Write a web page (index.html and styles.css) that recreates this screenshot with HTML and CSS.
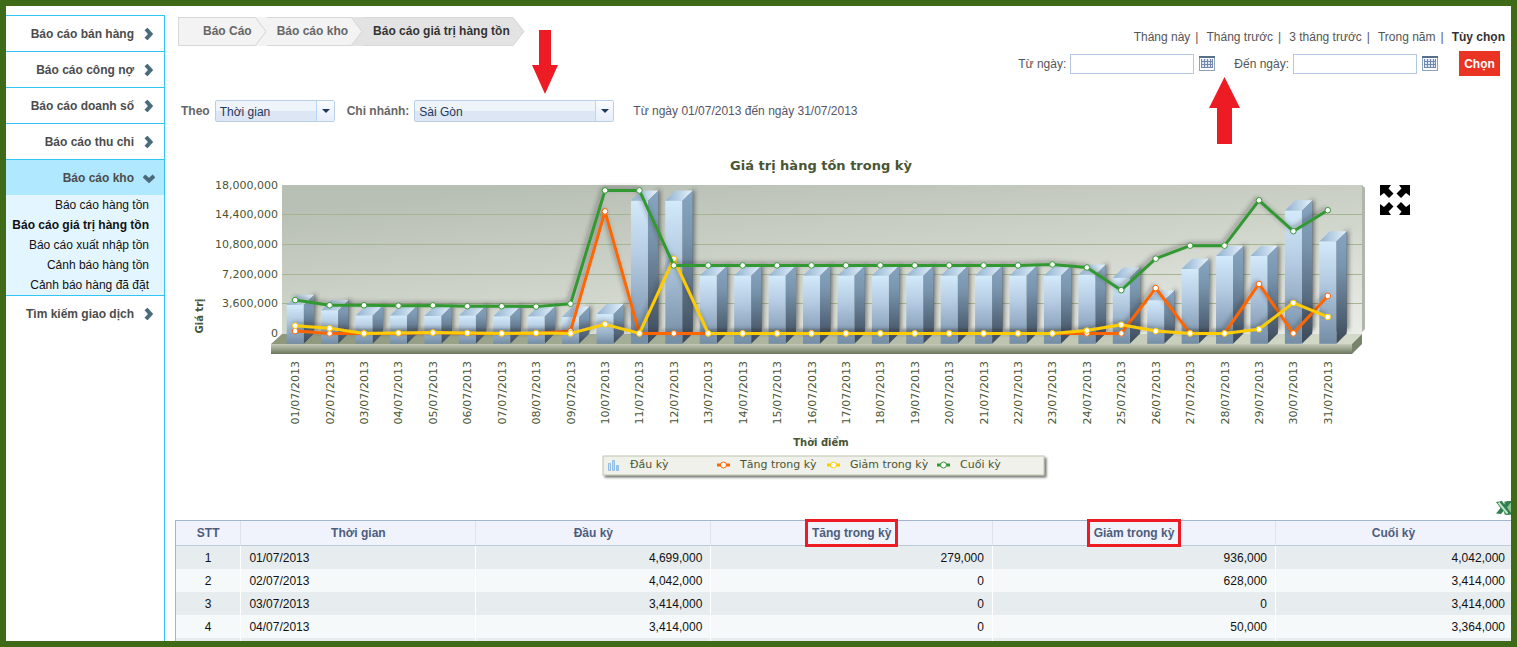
FILE: index.html
```html
<!DOCTYPE html>
<html lang="vi">

<head>
  <meta charset="UTF-8">
  <meta name="viewport" content="width=device-width, initial-scale=1.0">
  <title>Báo cáo giá trị hàng tồn</title>
  <link rel="stylesheet" href="styles.css">
</head>

<body>
  <div class="app">
    <nav class="sidebar">
      <ul class="menu">
        <li><a href="#">Báo cáo bán hàng <svg class="chevron" viewBox="0 0 12 12"><path d="M3 1 L7.500 6 L3 11" /></svg></a></li>
        <li><a href="#">Báo cáo công nợ <svg class="chevron" viewBox="0 0 12 12"><path d="M3 1 L7.500 6 L3 11" /></svg></a></li>
        <li><a href="#">Báo cáo doanh số <svg class="chevron" viewBox="0 0 12 12"><path d="M3 1 L7.500 6 L3 11" /></svg></a></li>
        <li><a href="#">Báo cáo thu chi <svg class="chevron" viewBox="0 0 12 12"><path d="M3 1 L7.500 6 L3 11" /></svg></a></li>
        <li class="open">
          <a href="#">Báo cáo kho <svg class="chevron" viewBox="0 0 12 12"><path d="M1 4 L6 8.500 L11 4" /></svg></a>
          <ul class="submenu">
            <li><a href="#">Báo cáo hàng tồn</a></li>
            <li><a href="#" class="current">Báo cáo giá trị hàng tồn</a></li>
            <li><a href="#">Báo cáo xuất nhập tồn</a></li>
            <li><a href="#">Cảnh báo hàng tồn</a></li>
            <li><a href="#">Cảnh báo hàng đã đặt</a></li>
          </ul>
        </li>
        <li><a href="#">Tìm kiếm giao dịch <svg class="chevron" viewBox="0 0 12 12"><path d="M3 1 L7.500 6 L3 11" /></svg></a></li>
      </ul>
    </nav>

    <main class="main">
      <header class="header">
        <ol class="breadcrumb">
          <li>
            <a href="#">Báo Cáo</a>
            <svg viewBox="0 0 12 29"><path class="light" d="M0 0 H12 V29 H0 Z" /><path class="edge" d="M0 0 L11 14.500 L0 29" /></svg>
          </li>
          <li>
            <a href="#">Báo cáo kho</a>
            <svg viewBox="0 0 12 29"><path class="dark" d="M0 0 H12 V29 H0 Z" /><path class="light edge" d="M0 0 L11 14.500 L0 29" /></svg>
          </li>
          <li class="active">
            <a href="#">Báo cáo giá trị hàng tồn</a>
            <svg viewBox="0 0 12 29"><path class="dark edge" d="M0 0.500 L11 14.500 L0 28.500" /></svg>
          </li>
        </ol>

        <form class="period">
          <div class="shortcuts">
            <a href="#">Tháng này</a>|<a href="#">Tháng trước</a>|<a href="#">3 tháng trước</a>|<a href="#">Trong năm</a>|<a href="#" class="selected">Tùy chọn</a>
          </div>
          <div class="dates">
            <label for="fromDate">Từ ngày:</label>
            <input type="text" id="fromDate">
            <button type="button" class="calendar" aria-label="Chọn từ ngày">
              <svg viewBox="0 0 16 15"><use href="#calendarIcon" /></svg>
            </button>
            <label for="toDate">Đến ngày:</label>
            <input type="text" id="toDate">
            <button type="button" class="calendar" aria-label="Chọn đến ngày">
              <svg viewBox="0 0 16 15"><use href="#calendarIcon" /></svg>
            </button>
            <button type="button" class="submit">Chọn</button>
          </div>
        </form>
      </header>

      <div class="filters">
        <label for="groupBy">Theo</label>
        <span class="select group-by">
          <select id="groupBy">
            <option>Thời gian</option>
          </select>
        </span>
        <label for="branch">Chi nhánh:</label>
        <span class="select branch">
          <select id="branch">
            <option>Sài Gòn</option>
          </select>
        </span>
        <span class="range">Từ ngày 01/07/2013 đến ngày 31/07/2013</span>
      </div>

      <section class="chart">
        <svg id="stockChart" viewBox="0 0 1200 350" role="img" aria-label="Giá trị hàng tồn trong kỳ">
          <defs>
            <linearGradient id="wall" gradientUnits="userSpaceOnUse" x1="107" y1="45" x2="130" y2="293">
              <stop offset="0.100" stop-color="#b8bfb4" />
              <stop offset="1" stop-color="#eaede6" />
            </linearGradient>
            <linearGradient id="floor" x1="0" x2="1">
              <stop offset="0" stop-color="#8c977c" />
              <stop offset="1" stop-color="#d4dac9" />
            </linearGradient>
            <linearGradient id="base" x1="0" y1="0" x2="0" y2="1">
              <stop offset="0" stop-color="#c5ccba" />
              <stop offset="1" stop-color="#6b765e" />
            </linearGradient>
            <linearGradient id="barFront" x1="0" y1="0" x2="0" y2="1">
              <stop offset="0" stop-color="#d3eafb" />
              <stop offset="0.400" stop-color="#b3cae1" />
              <stop offset="1" stop-color="#738da5" />
            </linearGradient>
            <linearGradient id="barSide" x1="0" y1="0" x2="0" y2="1">
              <stop offset="0" stop-color="#86a5c1" />
              <stop offset="0.300" stop-color="#7a96af" />
              <stop offset="1" stop-color="#3c4959" />
            </linearGradient>
            <linearGradient id="barTop" x1="0" x2="1">
              <stop offset="0" stop-color="#8fb1d0" />
              <stop offset="1" stop-color="#e6f3fd" />
            </linearGradient>
            <linearGradient id="legendBar" x1="0" x2="1">
              <stop offset="0" stop-color="#cbe6fb" />
              <stop offset="1" stop-color="#9cc8ee" />
            </linearGradient>
            <filter id="shadow" x="-40%" y="-20%" width="200%" height="140%">
              <feDropShadow dx="2" dy="-2" stdDeviation="2" flood-color="#333" flood-opacity="0.600" />
            </filter>
            <filter id="lineShadow" filterUnits="userSpaceOnUse" x="0" y="0" width="1200" height="350">
              <feDropShadow dx="-2" dy="-2" stdDeviation="2" flood-color="#333" flood-opacity="0.450" />
            </filter>
            <filter id="legendShadow" x="-5%" y="-20%" width="110%" height="160%">
              <feDropShadow dx="2" dy="2" stdDeviation="1" flood-color="#333" flood-opacity="0.700" />
            </filter>
          </defs>

          <text class="chart-title" x="646" y="30">Giá trị hàng tồn trong kỳ</text>
          <text class="axis-title" transform="translate(28 176) rotate(-90)">Giá trị</text>
          <text class="axis-title" x="646" y="306">Thời điểm</text>

          <path d="M1187 45 L1190 48 V189 L1187 192 Z" fill="#b0b7aa" />
          <rect x="107" y="45" width="1080" height="149" fill="url(#wall)" />
          <g id="grid"></g>
          <path d="M107 194 H1187 L1177 204 H96 Z" fill="url(#floor)" />
          <rect x="96" y="204" width="1081" height="10" fill="url(#base)" />
          <path d="M1177 204 L1187 194 V204 L1177 214 Z" fill="#78836b" />
          <g id="bars"></g>
          <g id="lines"></g>
          <g id="labels"></g>

          <g class="legend">
            <rect x="428" y="316" width="441" height="19" fill="#eff1ea" stroke="#bec8ac" filter="url(#legendShadow)" />
            <path d="M433.500 323.500 h2 v7 h-2 z M437.500 320.500 h2 v10 h-2 z M441.500 325.500 h2 v5 h-2 z" fill="url(#legendBar)" stroke="#93bde4" />
            <text x="455" y="328">Đầu kỳ</text>
            <path d="M542 325 h13" stroke="#ff6600" stroke-width="3" />
            <circle cx="548.500" cy="325" r="3" stroke="#ff6600" />
            <text x="565" y="328">Tăng trong kỳ</text>
            <path d="M652 325 h13" stroke="#ffcc00" stroke-width="3" />
            <circle cx="658.500" cy="325" r="3" stroke="#ffcc00" />
            <text x="675" y="328">Giảm trong kỳ</text>
            <path d="M762 325 h13" stroke="#339933" stroke-width="3" />
            <circle cx="768.500" cy="325" r="3" stroke="#339933" />
            <text x="785" y="328">Cuối kỳ</text>
          </g>
        </svg>

        <button type="button" class="expand" aria-label="Phóng to">
          <svg viewBox="0 0 30 30">
            <path d="M0 0 H11 L8.500 3.500 L13.500 8.500 L9 13 L4 8 L0 11 Z" />
            <path d="M30 0 H19 L21.500 3.500 L16.500 8.500 L21 13 L26 8 L30 11 Z" />
            <path d="M0 30 H11 L8.500 26.500 L13.500 21.500 L9 17 L4 22 L0 19 Z" />
            <path d="M30 30 H19 L21.500 26.500 L16.500 21.500 L21 17 L26 22 L30 19 Z" />
          </svg>
        </button>
      </section>

      <div class="export">
        <a href="#" aria-label="Xuất Excel">
          <svg viewBox="0 0 20 16">
            <rect x="9" y="2" width="11" height="12" fill="#8fc49b" stroke="#2f7d4b" />
            <path d="M0 2 L6 1 L8.500 4.500 L11 1 L16 1 L11 7.500 L16 14 L10 15 L7.500 11 L5 14 L0 13.500 L4.500 8 Z" fill="#2f8050" />
            <path d="M2.500 2.500 L11.500 13.500" stroke="#c5e4ca" stroke-width="2" />
          </svg>
        </a>
      </div>

      <table class="report">
        <colgroup>
          <col class="col-no">
          <col class="col-date">
          <col class="col-opening">
          <col class="col-increase">
          <col class="col-decrease">
          <col>
        </colgroup>
        <thead>
          <tr>
            <th>STT</th>
            <th>Thời gian</th>
            <th>Đầu kỳ</th>
            <th><span class="marked">Tăng trong kỳ</span></th>
            <th><span class="marked">Giảm trong kỳ</span></th>
            <th>Cuối kỳ</th>
          </tr>
        </thead>
        <tbody>
          <tr><td>1</td><td>01/07/2013</td><td>4,699,000</td><td>279,000</td><td>936,000</td><td>4,042,000</td></tr>
          <tr><td>2</td><td>02/07/2013</td><td>4,042,000</td><td>0</td><td>628,000</td><td>3,414,000</td></tr>
          <tr><td>3</td><td>03/07/2013</td><td>3,414,000</td><td>0</td><td>0</td><td>3,414,000</td></tr>
          <tr><td>4</td><td>04/07/2013</td><td>3,414,000</td><td>0</td><td>50,000</td><td>3,364,000</td></tr>
          <tr><td></td><td></td><td></td><td></td><td></td><td></td></tr>
        </tbody>
      </table>

      <!-- Pointers laid over the page -->
      <svg class="pointer pointer-branch" viewBox="0 0 26 64"><path d="M7 0 H19 V35 H26 L13 64 L0 35 H7 Z" /></svg>
      <svg class="pointer pointer-dates" viewBox="0 0 31 67"><path d="M15.500 0 L31 31 H23 V67 H8 V31 H0 Z" /></svg>
    </main>
  </div>

  <svg class="symbols">
    <symbol id="calendarIcon" viewBox="0 0 16 15">
      <rect x="0.500" y="0.500" width="15" height="14" fill="#fff" stroke="#8ea3b8" />
      <rect x="0" y="0" width="16" height="2" fill="#56708a" />
      <rect x="2" y="3" width="12" height="9" fill="#dfe7f2" />
      <path d="M2.500 3 V12 M5.500 3 V12 M8.500 3 V12 M11.500 3 V12 M13.500 3 V12 M2 5.500 H14 M2 8.500 H14 M2 11.500 H14" stroke="#7388ad" />
    </symbol>
  </svg>

  <script src="chart.js"></script>
</body>

</html>
```
FILE: styles.css
```css
* {
  box-sizing: border-box;
}

body {
  margin: 0;
  font-family: "Liberation Sans", Arial, sans-serif;
  font-size: 12px;
  color: #555;
  background-color: #fff;
}

a {
  color: inherit;
  text-decoration: none;
}

ul,
ol {
  list-style: none;
  margin: 0;
  padding: 0;
}

svg {
  display: block;
}

.symbols {
  display: none;
}

.app {
  display: flex;
  height: 100vh;
  border: 6px solid #3f6b19;
  overflow: hidden;
}

/* Sidebar */
.sidebar {
  flex: 0 0 159px;
  margin-top: 9px;
  border-right: 1px solid #33c5f8;
}

.menu > li {
  border-top: 1px solid #33c5f8;
}

.menu > li > a {
  display: flex;
  align-items: center;
  justify-content: flex-end;
  gap: 9px;
  height: 35px;
  padding-right: 9px;
  font-weight: bold;
  color: #4c4c4c;
}

.chevron {
  width: 12px;
  height: 12px;
  fill: none;
  stroke: #4b6b7a;
  stroke-width: 4;
}

.menu > li.open > a {
  background-color: #b0e8ff;
}

.submenu {
  background-color: #e3f6ff;
  text-align: right;
  color: #111;
}

.submenu a {
  display: block;
  padding-right: 15px;
  line-height: 20px;
}

.submenu .current {
  font-weight: bold;
}

/* Main column */
.main {
  position: relative;
  flex: 1;
  min-width: 0;
  padding: 11px 0 0 10px;
}

.header {
  display: flex;
  justify-content: space-between;
  align-items: flex-start;
  height: 71px;
  padding: 0 6px 0 3px;
}

.breadcrumb {
  display: flex;
  height: 29px;
  border-left: 1px solid #d8d8d8;
}

.breadcrumb li {
  display: flex;
  font-weight: bold;
  color: #666;
}

.breadcrumb a {
  padding: 0 3px 0 10px;
  line-height: 27px;
  border: solid #d8d8d8;
  border-width: 1px 0;
  background-color: #f3f3f3;
}

.breadcrumb li:first-child a {
  padding-left: 24px;
}

.breadcrumb .active a {
  color: #333;
  background-color: #e3e3e3;
}

.breadcrumb svg {
  width: 12px;
  height: 29px;
  fill: none;
}

.breadcrumb .light {
  fill: #f3f3f3;
}

.breadcrumb .dark {
  fill: #e3e3e3;
}

.breadcrumb .edge {
  stroke: #d4d4d4;
}

.period {
  padding-top: 12px;
}

.shortcuts {
  display: flex;
  justify-content: flex-end;
  line-height: 16px;
}

.shortcuts a {
  margin: 0 5px 0 8px;
}

.shortcuts .selected {
  margin-right: 0;
  font-weight: bold;
  color: #333;
}

.dates {
  display: flex;
  align-items: center;
  justify-content: flex-end;
  padding: 6px 5px 0 0;
}

.dates input {
  width: 124px;
  height: 20px;
  margin: 0 5px 0 4px;
  padding: 0 4px;
  border: 1px solid #b5c7de;
  font: inherit;
}

.calendar {
  width: 16px;
  height: 15px;
  margin-right: 19px;
  padding: 0;
  border: none;
  background: none;
}

.submit {
  width: 41px;
  height: 25px;
  margin-left: 2px;
  padding: 0;
  border: none;
  background-color: #e93323;
  color: #fff;
  font: bold 12px "Liberation Sans", Arial, sans-serif;
}

/* Filters */
.filters {
  display: flex;
  align-items: center;
  margin-top: 12px;
  padding-left: 6px;
}

.filters label {
  font-weight: bold;
  color: #666;
}

.select {
  position: relative;
  margin: 0 12px 0 5px;
}

.select select {
  width: 100%;
  height: 22px;
  padding: 2px 20px 0 4px;
  appearance: none;
  border: 1px solid #b8cfe6;
  border-radius: 2px;
  background: linear-gradient(#eff4fb 50%, #dce6f4 50%);
  color: #1e395b;
  font: inherit;
}

.select::after {
  content: "";
  position: absolute;
  top: 9px;
  right: 5px;
  border: 4px solid transparent;
  border-top-color: #1e395b;
  border-bottom: none;
}

.select::before {
  content: "";
  position: absolute;
  top: 1px;
  right: 1px;
  bottom: 1px;
  width: 17px;
  border-left: 1px solid #b8d6fb;
  background: linear-gradient(#fafcff, #e6eefa);
  pointer-events: none;
}

.group-by {
  width: 120px;
}

.branch {
  width: 200px;
  margin-right: 19px;
}

.range {
  color: #555566;
}

/* Chart */
.chart {
  display: flex;
  align-items: flex-start;
  gap: 5px;
  margin-top: 18px;
  padding-right: 101px;
}

#stockChart {
  flex: 1;
  min-width: 0;
  font-family: "DejaVu Sans", Verdana, sans-serif;
  font-size: 11px;
  fill: #4a5534;
}

.chart-title,
.axis-title {
  font-weight: bold;
  text-anchor: middle;
}

.chart-title {
  font-size: 13px;
}

.axis-title {
  font-size: 10px;
}

.value-label,
.date-label {
  text-anchor: end;
}

.series {
  fill: none;
  stroke-width: 3;
  stroke-linejoin: round;
}

#lines circle,
.legend circle {
  fill: #fff;
}

.expand {
  width: 30px;
  height: 30px;
  margin-top: 45px;
  padding: 0;
  border: none;
  background: none;
}

/* Report table */
.export {
  display: flex;
  justify-content: flex-end;
  height: 30px;
  padding-top: 10px;
}

.export svg {
  width: 20px;
  height: 16px;
  margin-right: -5px;
}

.report {
  width: 100%;
  table-layout: fixed;
  border-collapse: separate;
  border-spacing: 0;
  border: solid #a3b4cb;
  border-width: 1px 0 0 1px;
}

.col-no {
  width: 4.9%;
}

.col-date,
.col-opening {
  width: 17.6%;
}

.col-increase {
  width: 21.1%;
}

.col-decrease {
  width: 21.2%;
}

.report th {
  height: 25px;
  padding: 0;
  border-right: 1px solid #dde4ef;
  border-bottom: 1px solid #bccbdc;
  background-color: #f0f3fb;
  color: #4d5c7d;
}

.report td {
  height: 23px;
  padding: 0 8px;
  border-right: 1px solid #fff;
  text-align: right;
  color: #111;
  background-color: #f5f9fa;
}

.report th:last-child,
.report td:last-child {
  border-right: none;
}

.report td:last-child {
  padding-right: 6px;
}

.report td:nth-child(1) {
  text-align: center;
}

.report td:nth-child(2) {
  text-align: left;
}

.report tr:nth-child(odd) td {
  background-color: #e7ecee;
}

.marked {
  outline: 3px solid #ed1c24;
  outline-offset: 4px;
}

.pointer {
  position: absolute;
  fill: #ed1c24;
  pointer-events: none;
}

.pointer-branch {
  top: 24px;
  left: 367px;
  width: 26px;
}

.pointer-dates {
  top: 71px;
  right: 271px;
  width: 31px;
}
```
FILE: chart.js
```js
const SVG_NS = 'http://www.w3.org/2000/svg';

// Values are in millions, one per day of the month
const increase = [0.279, 0, 0, 0, 0.1, 0, 0, 0, 0.3, 14.8, 0, 0, 0, 0, 0, 0, 0, 0, 0, 0, 0, 0, 0, 0, 0, 5.5, 0, 0, 6, 0, 4.55];
const decrease = [0.936, 0.628, 0, 0.05, 0.1, 0.05, 0, 0.05, 0, 1.1, 0, 9.05, 0, 0, 0, 0, 0, 0, 0, 0, 0, 0, 0, 0.35, 1.05, 0.28, 0, 0, 0.5, 3.7, 2];
const closing = [4.042, 3.414, 3.414, 3.364, 3.4, 3.3, 3.3, 3.25, 3.6, 17.35, 17.35, 8.25, 8.25, 8.25, 8.25, 8.25, 8.25, 8.25, 8.25, 8.25, 8.25, 8.25, 8.37, 8, 5.25, 9.07, 10.65, 10.65, 16.15, 12.4, 14.95];
const opening = [4.699].concat(closing.slice(0, -1));

const zeroY = 193.4;
const unit = 8.24;
const firstX = 120.2;
const step = 34.42;
const barWidth = 17;
const depth = 10.4;

const grid = document.getElementById('grid');
const bars = document.getElementById('bars');
const lines = document.getElementById('lines');
const labels = document.getElementById('labels');

function add(parent, name, attrs, text) {
  const el = document.createElementNS(SVG_NS, name);
  for (const key in attrs) {
    el.setAttribute(key, attrs[key]);
  }
  if (text) {
    el.textContent = text;
  }
  parent.appendChild(el);
  return el;
}

// Grid lines and value labels
for (let i = 0; i <= 5; i++) {
  const value = i * 3.6;
  const y = Math.floor(zeroY - value * unit);
  if (i > 0 && i < 5) {
    add(grid, 'path', { d: `M107 ${y + 0.5} H1187`, stroke: '#a5b592' });
  }
  add(labels, 'text', { class: 'value-label', x: 103, y: y + 4 }, Math.round(value * 1000000).toLocaleString('en-US'));
}

// 3D columns
opening.forEach((value, i) => {
  const x = firstX + i * step - barWidth / 2;
  const right = x + barWidth;
  const bottom = zeroY + depth;
  const top = bottom - value * unit;
  const group = add(bars, 'g', {});
  add(group, 'path', { d: `M${right} ${top} l${depth} ${-depth} V${zeroY - 2} H${right} Z`, fill: '#555', filter: 'url(#shadow)' });
  add(group, 'path', { d: `M${right} ${top} l${depth} ${-depth} V${bottom - depth} L${right} ${bottom} Z`, fill: 'url(#barSide)' });
  add(group, 'path', { d: `M${x} ${top} l${depth} ${-depth} h${barWidth} l${-depth} ${depth} Z`, fill: 'url(#barTop)' });
  add(group, 'rect', { x: x, y: top, width: barWidth, height: bottom - top, fill: 'url(#barFront)' });

  const day = String(i + 1).padStart(2, '0');
  add(labels, 'text', { class: 'date-label', transform: `translate(${firstX + i * step + 4} 221) rotate(-90)` }, `${day}/07/2013`);
});

function drawSeries(values, color) {
  const points = values.map((value, i) => [firstX + i * step, zeroY - value * unit]);
  add(lines, 'polyline', { class: 'series', points: points.join(' '), stroke: color, filter: 'url(#lineShadow)' });
  points.forEach(([x, y]) => {
    add(lines, 'circle', { cx: x, cy: y, r: 2.8, stroke: color });
  });
}

drawSeries(increase, '#ff6600');
drawSeries(decrease, '#ffcc00');
drawSeries(closing, '#339933');
```
